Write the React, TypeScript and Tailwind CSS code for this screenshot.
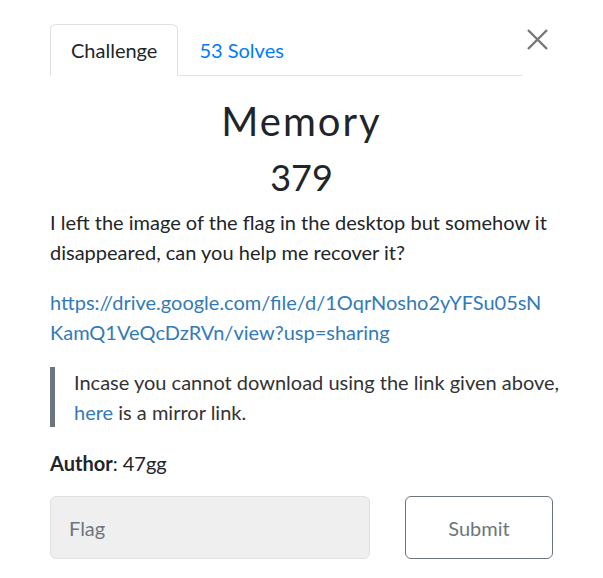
import React from "react";

export default function App() {
  return (
    <div
      className="w-[603px] h-[578px] bg-white px-[50px] pt-[24px] text-[#212529]"
      style={{ fontFamily: "Lato, 'Noto Sans', sans-serif" }}
    >
      <div className="flex items-start">
        <ul className="flex flex-1 border-b border-[#dee2e6] text-[20px] leading-[26px]">
          <li className="-mb-px">
            <span className="block px-5 py-3 border border-[#dee2e6] border-b-white rounded-t-md bg-white text-[#212529]">
              Challenge
            </span>
          </li>
          <li className="-mb-px">
            <span className="block px-5 py-3 border border-transparent text-[#007bff]">
              53 Solves
            </span>
          </li>
        </ul>
        <button className="w-[31px] h-[50px] flex items-start justify-center pt-[5px]">
          <svg width="21" height="21" viewBox="0 0 21 21">
            <path d="M1 1L20 20M20 1L1 20" stroke="#777" strokeWidth="2.4" fill="none" />
          </svg>
        </button>
      </div>

      <h2 className="mt-[21px] text-center text-[40px] leading-[48px] tracking-[2px] font-normal">
        Memory
      </h2>
      <h3 className="mt-[11px] text-center text-[36px] leading-[43px] font-normal">379</h3>

      <div className="mt-[8px] text-[20px] leading-[30px]">
        <p className="mb-[20px]">
          I left the image of the flag in the desktop but somehow it disappeared, can you help me recover it?
        </p>
        <p className="mb-[20px] text-[#337ab7] break-all">
          https://drive.google.com/file/d/1OqrNosho2yYFSu05sNKamQ1VeQcDzRVn/view?usp=sharing
        </p>
        <blockquote className="mr-[-12px] border-l-[5px] border-[#6c757d] pl-[19px] text-[#333]">
          Incase you cannot download using the link given above,{" "}
          <span className="text-[#337ab7]">here</span> is a mirror link.
        </blockquote>
        <p className="mt-[21px]">
          <span className="font-bold">Author</span>: 47gg
        </p>
      </div>

      <div className="mt-[18px] flex gap-[35px]">
        <div className="flex-1 h-[63px] rounded-md border border-[#e0e0e0] bg-[#efefef] flex items-center pl-[18px] text-[20px] text-[#6c757d]">
          Flag
        </div>
        <button className="w-[148px] h-[63px] rounded-md border border-[#6c757d] text-[20px] text-[#6c757d]">
          Submit
        </button>
      </div>
    </div>
  );
}
